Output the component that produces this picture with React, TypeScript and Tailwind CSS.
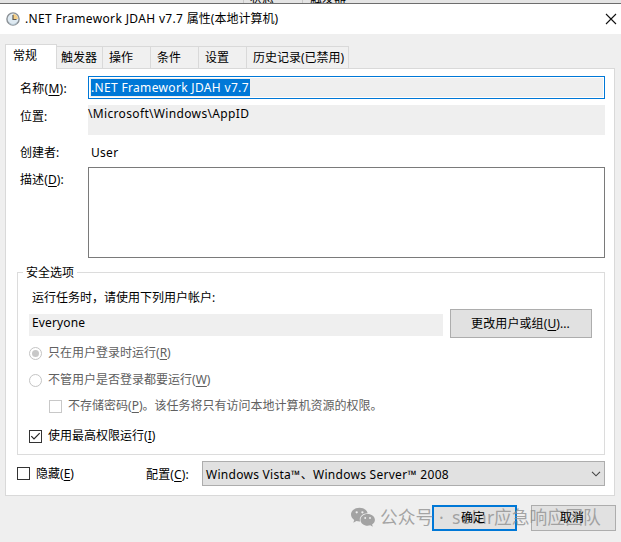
import type { ReactNode } from "react";

function Key({ k }: { k: string }) {
  return (
    <>
      (<span className="underline decoration-1 underline-offset-[2px]">{k}</span>)
    </>
  );
}

function Tab({ children, className }: { children: ReactNode; className: string }) {
  return (
    <div className={`h-[22px] border-t border-r border-[#d9d9d9] bg-[#f0f0f0] pt-[2px] pl-[6px] ${className}`}>
      {children}
    </div>
  );
}

function Box({ checked, className }: { checked?: boolean; className: string }) {
  return (
    <span className={`block size-[13px] shrink-0 border bg-white ${className}`}>
      {checked && (
        <svg width="11" height="11" viewBox="0 0 11 11" fill="none" stroke="#222" strokeWidth="1.2">
          <path d="M1.3 5.2 4 7.9 9.7 2.2" />
        </svg>
      )}
    </span>
  );
}

function Radio({ checked }: { checked?: boolean }) {
  return (
    <span className="flex size-[13px] shrink-0 items-center justify-center rounded-full border border-[#c4c4c4] bg-white">
      {checked && <span className="block size-[7px] rounded-full bg-[#c8c8c8]" />}
    </span>
  );
}

function ClockIcon() {
  return (
    <svg width="14" height="14" viewBox="0 0 14 14" className="shrink-0">
      <circle cx="7" cy="7" r="6.1" fill="#dfeaf2" stroke="#8b9196" strokeWidth="1.4" />
      <path d="M7 7V2a5 5 0 0 1 5 5Z" fill="#f6cf86" />
      <path d="M7 3V7.5h3.5" fill="none" stroke="#5d5952" strokeWidth="1.2" />
      <path d="M3 10.5a5 5 0 0 0 8 0" fill="none" stroke="#b8cad6" strokeWidth="1" />
    </svg>
  );
}

function WeChatIcon() {
  return (
    <svg width="24" height="20" viewBox="0 0 24 20" className="shrink-0">
      <path
        fill="#a3a3a3"
        d="M8.5.8C3.8.8 0 3.8 0 7.6c0 2.2 1.2 4 3.2 5.3l-.9 2.8 3.1-1.6c1 .3 2 .4 3.1.4h.6C7.6 10.1 11.5 6.1 16.7 6.2 15.9 3 12.6.8 8.5.8Z"
      />
      <path
        fill="#a3a3a3"
        d="M16.6 7.1c-4 0-7.1 2.6-7.1 5.8s3.2 5.8 7.1 5.8c.9 0 1.8-.1 2.6-.4l2.6 1.4-.7-2.3c1.8-1.1 2.8-2.7 2.8-4.5 0-3.2-3.3-5.8-7.3-5.8Z"
      />
      <g fill="#efefef">
        <circle cx="5.7" cy="5.3" r="1.15" />
        <circle cx="11.4" cy="5.3" r="1.15" />
        <circle cx="14.2" cy="11" r=".95" />
        <circle cx="19" cy="11" r=".95" />
      </g>
    </svg>
  );
}

export default function App() {
  return (
    <div className="relative flex h-[542px] w-[621px] flex-col overflow-hidden bg-[#efefef] font-['Noto_Sans','Noto_Sans_CJK_SC',sans-serif] text-[12px] leading-[18px] whitespace-nowrap text-black">
      <div className="flex h-[3px] shrink-0 overflow-hidden bg-[#e4e4e4]">
        <div className="ml-[243px] flex h-[3px] w-[60px] items-end border-x border-[#c8c8c8] pl-[6px]">
          <span className="-mb-[5px] leading-[18px]">状态</span>
        </div>
        <div className="flex h-[3px] items-end pl-[7px]">
          <span className="-mb-[5px] leading-[18px]">触发器</span>
        </div>
      </div>

      <header className="flex h-[31px] shrink-0 items-center border-t border-[#6d6d6d] bg-white pl-[6px]">
        <ClockIcon />
        <h1 className="ml-[5px] flex-1">
          <span className="tracking-[0.35px]">.NET Framework JDAH v7.7 </span>属性(本地计算机)
        </h1>
        <svg width="12" height="12" viewBox="0 0 12 12" className="mr-[4px] mb-px" stroke="#111" strokeWidth="1.1">
          <path d="m1 1 10 10M11 1 1 11" />
        </svg>
      </header>

      <nav className="relative z-10 mt-[10px] -mb-px ml-[5px] flex h-[25px] shrink-0 items-end">
        <div className="h-[25px] w-[52px] border-x border-t border-[#d9d9d9] bg-white pt-[2px] pl-[7px]">常规</div>
        <Tab className="mb-px w-[46px] !pl-[4px]">触发器</Tab>
        <Tab className="mb-px w-[48px]">操作</Tab>
        <Tab className="mb-px w-[48px]">条件</Tab>
        <Tab className="mb-px w-[48px]">设置</Tab>
        <Tab className="mb-px w-[102px]">历史记录(已禁用)</Tab>
      </nav>

      <main className="ml-[5px] flex h-[428px] w-[610px] shrink-0 flex-col border border-[#d9d9d9] bg-white pt-[7px] pr-[9px] pl-[11px]">
        <div className="flex h-[23px]">
          <label className="w-[71px] pt-[4px] pl-[3px] tracking-[0.25px]">名称<Key k="M" />:</label>
          <div className="h-[23px] flex-1 border border-[#0078d7] bg-white p-px">
            <div className="flex h-[19px] items-center bg-[#efefef] pl-px">
              <span className="h-[17px] w-[159px] bg-[#0078d7] leading-[18px] tracking-[0.33px] text-white">
                .NET Framework JDAH v7.7
              </span>
            </div>
          </div>
        </div>
        <div className="mt-[6px] flex h-[30px]">
          <span className="w-[71px] pt-[3px] pl-[3px]">位置:</span>
          <div className="flex-1 bg-[#efefef] tracking-[0.34px]">\Microsoft\Windows\AppID</div>
        </div>
        <div className="mt-[9px] flex h-[18px]">
          <span className="w-[71px] pl-[3px]">创建者:</span>
          <span className="pl-[3px] tracking-[0.3px]">User</span>
        </div>
        <div className="mt-[5px] flex h-[91px]">
          <label className="w-[71px] pt-[4px] pl-[3px] tracking-[0.1px]">描述<Key k="D" />:</label>
          <div className="h-[91px] flex-1 border border-[#7a7a7a] bg-white" />
        </div>

        <fieldset className="mt-[5px] flex h-[192px] w-[588px] flex-col">
          <div className="flex h-[18px] items-center">
            <span className="h-px w-[6px] bg-[#dcdcdc]" />
            <span className="w-[54px] pt-px pl-[3px]">安全选项</span>
            <span className="h-px flex-1 bg-[#dcdcdc]" />
          </div>
          <div className="-mt-[9px] h-[183px] border-x border-b border-[#dcdcdc] pl-[11px]">
            <p className="pt-[17px] pl-[3px]">运行任务时，请使用下列用户帐户:</p>
            <div className="mt-[2px] flex h-[29px] items-center">
              <div className="mt-[3px] h-[22px] w-[414px] bg-[#efefef] pl-[3px] tracking-[0.15px]">Everyone</div>
              <button className="ml-[7px] h-[29px] w-[142px] border border-[#adadad] bg-[#e1e1e1] pr-px tracking-[0.1px]">
                更改用户或组<Key k="U" />...
              </button>
            </div>
            <div className="mt-[6px] flex h-[18px] items-center gap-[6px] text-[#606060]">
              <Radio checked />
              <span>只在用户登录时运行<Key k="R" /></span>
            </div>
            <div className="mt-[9px] flex h-[18px] items-center gap-[6px] text-[#606060]">
              <Radio />
              <span>不管用户是否登录都要运行<Key k="W" /></span>
            </div>
            <div className="mt-[8px] ml-[20px] flex h-[18px] items-center gap-[6px] text-[#606060]">
              <Box className="border-[#c8c8c8]" />
              <span>不存储密码<Key k="P" />。该任务将只有访问本地计算机资源的权限。</span>
            </div>
            <div className="mt-[12px] flex h-[18px] items-center gap-[6px]">
              <Box checked className="border-[#333]" />
              <span>使用最高权限运行<Key k="I" /></span>
            </div>
          </div>
        </fieldset>

        <div className="mt-[6px] flex h-[25px] items-center">
          <Box className="border-[#333]" />
          <span className="ml-[6px] w-[110px]">隐藏<Key k="E" /></span>
          <span className="w-[56px] pt-[2px] tracking-[0.15px]">配置<Key k="C" />:</span>
          <div className="flex h-[25px] flex-1 items-center justify-between border border-[#adadad] bg-[#e1e1e1] pr-[3px] pl-[3px]">
            <span className="pt-[2px] tracking-[0.28px]">Windows Vista™、Windows Server™ 2008</span>
            <svg width="10" height="6" viewBox="0 0 10 6" fill="none" stroke="#444" strokeWidth="1.1">
              <path d="m1 .8 4 4 4-4" />
            </svg>
          </div>
        </div>
      </main>

      <footer className="mt-[9px] flex h-[26px] shrink-0 justify-end gap-[14px] pr-[5px]">
        <button className="h-[26px] w-[85px] border-2 border-[#0078d7] bg-[#e1e1e1] pr-[3px]">
          <span className="relative z-20">确定</span>
        </button>
        <button className="h-[26px] w-[85px] border border-[#adadad] bg-[#e1e1e1] pr-[3px]">
          <span className="relative z-20">取消</span>
        </button>
      </footer>

      <div className="absolute top-[504px] left-[351px] z-10 flex h-[26px] items-center text-[17.8px] leading-[26px] text-[#8c8c8c]/75">
        <WeChatIcon />
        <span className="ml-[5px] w-[59px]">公众号</span>
        <span className="w-[13px]">·</span>
        <span className="w-[42px] tracking-[0.3px]">solar</span>
        <span>应急响应团队</span>
      </div>
    </div>
  );
}
